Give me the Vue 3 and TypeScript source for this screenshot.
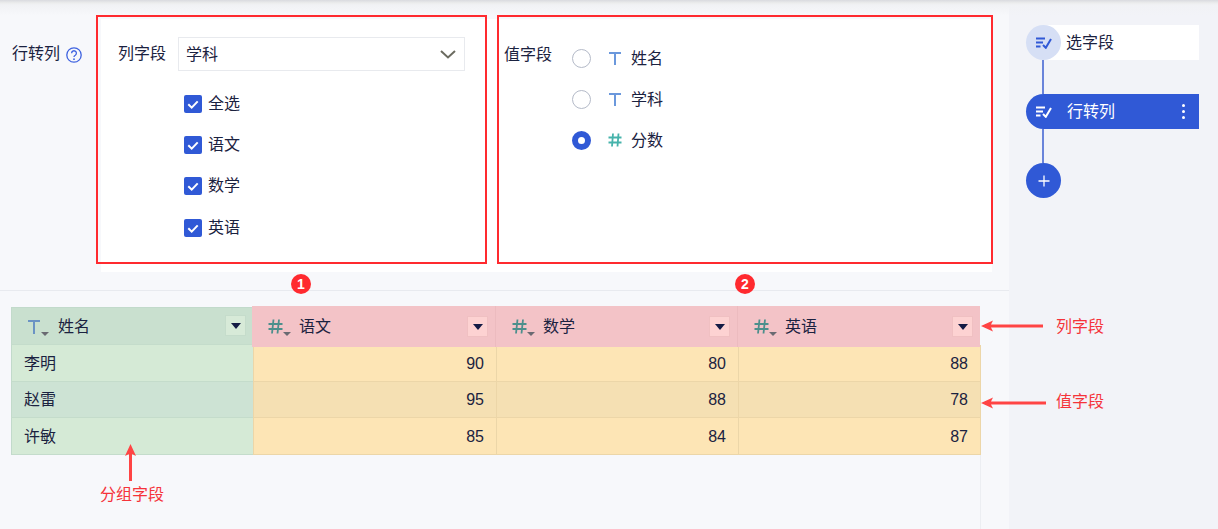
<script setup lang="ts">
const checks: string[] = ['全选', '语文', '数学', '英语']
const values: { type: 'text' | 'num'; label: string; on: boolean }[] = [
  { type: 'text', label: '姓名', on: false },
  { type: 'text', label: '学科', on: false },
  { type: 'num', label: '分数', on: true },
]
const subjects: string[] = ['语文', '数学', '英语']
const rows: { name: string; scores: number[] }[] = [
  { name: '李明', scores: [90, 80, 88] },
  { name: '赵雷', scores: [95, 88, 78] },
  { name: '许敏', scores: [85, 84, 87] },
]
</script>

<template>
  <div class="page">
    <div class="top-fade"></div>

    <main class="main">
      <section class="config">
        <div class="config-label">
          <span>行转列</span>
          <svg class="help" viewBox="0 0 16 16" width="16" height="16">
            <circle cx="8" cy="8" r="7.200" fill="none" stroke="#3f63e0" stroke-width="1.300" />
            <path d="M5.600 6.200a2.400 2.400 0 1 1 3.700 2c-.9.500-1.300.9-1.300 1.900" fill="none" stroke="#3f63e0" stroke-width="1.300" />
            <circle cx="8" cy="12.200" r=".9" fill="#3f63e0" />
          </svg>
        </div>

        <div class="panel">
          <div class="panel-col">
            <div class="select-row">
              <span class="field-name">列字段</span>
              <div class="select">
                <span class="select-value">学科</span>
                <svg viewBox="0 0 16 9" width="16" height="9">
                  <path d="M1 1l7 6.500L15 1" fill="none" stroke="#6b6b60" stroke-width="2" />
                </svg>
              </div>
            </div>
            <ul class="check-list">
              <li v-for="c in checks" :key="c" class="check-item">
                <span class="checkbox">
                  <svg viewBox="0 0 18 18" width="18" height="18">
                    <path d="M4.300 9.300l3.400 3.300 6-6.200" fill="none" stroke="#fff" stroke-width="2" />
                  </svg>
                </span>
                <span>{{ c }}</span>
              </li>
            </ul>
          </div>

          <div class="panel-val">
            <span class="val-name">值字段</span>
            <ul class="radio-list">
              <li v-for="v in values" :key="v.label" class="radio-item">
                <span class="radio" :class="{ on: v.on }"></span>
                <svg v-if="v.type === 'text'" class="type-ic" viewBox="0 0 14 14" width="14" height="14">
                  <path d="M1 2h12M7 2v12" fill="none" stroke="#6b98dc" stroke-width="2" />
                </svg>
                <svg v-else class="type-ic" viewBox="0 0 14 14" width="14" height="14">
                  <path d="M5 .5L4 13.500M10.500 .5l-1 13M.5 4.500h13M.5 9.500h13" fill="none" stroke="#46b3ab" stroke-width="1.800" />
                </svg>
                <span>{{ v.label }}</span>
              </li>
            </ul>
          </div>
        </div>
      </section>

      <section class="data">
        <div class="table">
          <div class="head">
            <div class="hcell green-head">
              <span class="type-wrap">
                <svg viewBox="0 0 14 15" width="14" height="15">
                  <path d="M1 2h12M7 2v13" fill="none" stroke="#6b93c4" stroke-width="2" />
                </svg>
                <i class="mini-caret"></i>
              </span>
              <span>姓名</span>
              <span class="drop green-drop"><i></i></span>
            </div>
            <div class="pink-group">
              <div v-for="s in subjects" :key="s" class="hcell pink">
                <span class="type-wrap num">
                  <svg viewBox="0 0 15 15" width="15" height="15">
                    <path d="M5.500 .5L4 14.500M11 .5L9.500 14.500M.5 5h14M.5 10h14" fill="none" stroke="#4c8f8c" stroke-width="1.800" />
                  </svg>
                  <i class="mini-caret"></i>
                </span>
                <span>{{ s }}</span>
                <span class="drop pink-drop"><i></i></span>
              </div>
            </div>
          </div>
          <div v-for="r in rows" :key="r.name" class="row">
            <div class="cell name">{{ r.name }}</div>
            <div v-for="(n, i) in r.scores" :key="i" class="cell score">{{ n }}</div>
          </div>
        </div>
        <div class="tail"></div>
      </section>
    </main>

    <aside class="flow">
      <div class="node first">
        <span class="disc">
          <svg viewBox="0 0 16 12" width="16" height="12">
            <path d="M0 1.500h9M0 5.500h7M0 9.500h4.500M7 8l2.800 2.800L15 2" fill="none" stroke="#3059d6" stroke-width="2" />
          </svg>
        </span>
        <span>选字段</span>
      </div>
      <div class="link"></div>
      <div class="node active">
        <span class="disc">
          <svg viewBox="0 0 16 12" width="16" height="12">
            <path d="M0 1.500h9M0 5.500h7M0 9.500h4.500M7 8l2.800 2.800L15 2" fill="none" stroke="#fff" stroke-width="2" />
          </svg>
        </span>
        <span>行转列</span>
        <span class="kebab"><i></i><i></i><i></i></span>
      </div>
      <div class="link"></div>
      <div class="add">
        <svg viewBox="0 0 12 12" width="12" height="12">
          <path d="M6 .5v11M.5 6h11" fill="none" stroke="#fff" stroke-width="1.300" />
        </svg>
      </div>
    </aside>

    <!-- annotations drawn over the screenshot -->
    <div class="red-box box-a"></div>
    <div class="red-box box-b"></div>
    <span class="badge badge-a">1</span>
    <span class="badge badge-b">2</span>

    <svg class="arrows" viewBox="0 0 1218 529" width="1218" height="529">
      <g fill="#ff4444" stroke="none">
        <path d="M981 326l12-5.500 -2 4h52v3h-52l2 4z" />
        <path d="M981 403l12-5.500 -2 4h55v3h-55l2 4z" />
        <path d="M130.500 444l-5.500 12 4-2v27h3v-27l4 2z" />
      </g>
    </svg>
    <span class="note note-col">列字段</span>
    <span class="note note-val">值字段</span>
    <span class="note note-group">分组字段</span>
  </div>
</template>

<style>
html,
body {
  margin: 0;
  padding: 0;
}
</style>

<style scoped>
.page {
  position: relative;
  display: flex;
  width: 1218px;
  height: 529px;
  overflow: hidden;
  background: #f7f8fb;
  color: #1b2240;
  font-family: "Liberation Sans", "Noto Sans CJK SC", sans-serif;
  font-size: 16px;
  line-height: 22px;
}
ul {
  list-style: none;
  margin: 0;
  padding: 0;
}
i {
  display: block;
}
.top-fade {
  position: absolute;
  left: 0;
  top: 0;
  z-index: 1;
  width: 100%;
  height: 16px;
  background: linear-gradient(#d9dadf 0, #eceded 3px, #f1f2f5 5px, rgba(244, 245, 248, 0) 16px);
  pointer-events: none;
}

/* main column */
.main {
  display: flex;
  flex-direction: column;
  width: 1009px;
  flex: none;
}
.config {
  display: flex;
  box-sizing: border-box;
  height: 291px;
  border-bottom: 1px solid #e8eaef;
}
.config-label {
  display: flex;
  align-items: center;
  flex: none;
  gap: 6px;
  box-sizing: border-box;
  width: 101px;
  height: 22px;
  margin-top: 43px;
  padding-left: 12px;
}
.help {
  margin-top: 1px;
}
.panel {
  display: flex;
  width: 891px;
  height: 253px;
  margin-top: 19px;
  background: #fff;
}
.panel-col {
  box-sizing: border-box;
  width: 396px;
  padding: 18px 0 0 17px;
}
.select-row {
  display: flex;
  align-items: center;
  gap: 12px;
}
.field-name {
  width: 48px;
  flex: none;
}
.select {
  display: flex;
  align-items: center;
  justify-content: space-between;
  box-sizing: border-box;
  width: 287px;
  height: 34px;
  padding: 0 8px 0 7px;
  border: 1px solid #e8eaee;
}
.select-value {
  padding-top: 1px;
}
.check-list {
  margin: 12px 0 0 66px;
}
.check-item {
  display: flex;
  align-items: center;
  gap: 6px;
  height: 41.300px;
}
.checkbox {
  display: block;
  width: 18px;
  height: 18px;
  border-radius: 2px;
  background: #3059d6;
}
.checkbox svg {
  display: block;
}
.panel-val {
  display: flex;
  box-sizing: border-box;
  padding: 25px 0 0 7px;
}
.val-name {
  width: 68px;
  flex: none;
}
.radio-list {
  margin-top: -6px;
}
.radio-item {
  display: flex;
  align-items: center;
  height: 41.300px;
}
.radio {
  box-sizing: border-box;
  width: 19px;
  height: 19px;
  margin-top: -1px;
  margin-right: 17px;
  border: 1px solid #b4bac8;
  border-radius: 50%;
  background: #fff;
}
.radio.on {
  border: 6px solid #3059d6;
}
.type-ic {
  margin-top: -2px;
  margin-right: 9px;
}

/* table */
.data {
  display: flex;
  flex: 1;
  flex-direction: column;
  padding: 16px 0 0 11px;
}
.table {
  width: 970px;
}
.head {
  display: flex;
  height: 38px;
}
.hcell {
  position: relative;
  display: flex;
  align-items: center;
  box-sizing: border-box;
}
.green-head {
  width: 242px;
  flex: none;
  padding-top: 1px;
  border-top: 1px solid #c2dacb;
  border-left: 1px solid #c2dacb;
  border-bottom: 1px solid #c4dccb;
  background: #c9e0cf;
}
.pink-group {
  position: relative;
  z-index: 1;
  display: grid;
  grid-template-columns: 244px 242px 242px;
  width: 728px;
  height: 41px;
  margin: -1px 0 0 -1px;
  background: #f3c3c7;
}
.pink {
  border-right: 1px solid #ecbbbf;
}
.pink:last-child {
  border-right: 0;
}
.type-wrap {
  position: relative;
  display: block;
  width: 14px;
  height: 15px;
  margin: -1px 17px 0 15px;
}
.pink .type-wrap {
  width: 15px;
  margin-left: 16px;
  margin-right: 16px;
}
.type-wrap svg {
  display: block;
}
.mini-caret {
  position: absolute;
  right: -8px;
  bottom: -2px;
  width: 0;
  height: 0;
  border-top: 4px solid #6a6a72;
  border-left: 4px solid transparent;
  border-right: 4px solid transparent;
}
.drop {
  position: absolute;
  top: 50%;
  right: 7px;
  display: flex;
  align-items: center;
  justify-content: center;
  box-sizing: border-box;
  width: 21px;
  height: 21px;
  margin-top: -11px;
}
.green-drop {
  background: #d7ead8;
  border: 1px solid #c5dccb;
}
.pink-drop {
  background: #fdd2d2;
  border: 1px solid #f0c0c2;
}
.drop i {
  width: 0;
  height: 0;
  margin-top: 1px;
  border-top: 6px solid #141b45;
  border-left: 5px solid transparent;
  border-right: 5px solid transparent;
}
.row {
  display: grid;
  grid-template-columns: 242px 243px 242px 243px;
  height: 36px;
}
.row:nth-child(2),
.row:nth-child(4) {
  height: 37px;
}
.cell {
  display: flex;
  align-items: center;
  box-sizing: border-box;
  border-bottom: 1px solid #ecd6a8;
  padding-top: 1px;
}
.name {
  padding-left: 12px;
  border-left: 1px solid #c2dacb;
  border-bottom-color: #c4dccb;
  background: #d5ead6;
}
.score {
  justify-content: flex-end;
  padding-right: 12px;
  border-left: 1px solid #ecd6a8;
  background: #fde5b5;
}
.score:last-child {
  border-right: 1px solid #ecd6a8;
}
.row:nth-child(3) .name {
  background: #cde3d4;
}
.row:nth-child(3) .score {
  background: #f5e0b3;
}
.tail {
  flex: 1;
  box-sizing: border-box;
  width: 970px;
  border-right: 1px solid #eceef2;
}

/* step list */
.flow {
  display: flex;
  flex-direction: column;
  flex: 1;
  padding: 25px 19px 0 17px;
  background: #f2f3f8;
}
.node {
  display: flex;
  align-items: center;
  height: 35px;
  flex: none;
}
.first {
  background: linear-gradient(90deg, transparent 17px, #fff 17px);
}
.disc {
  display: flex;
  align-items: center;
  justify-content: center;
  flex: none;
  width: 35px;
  height: 35px;
  border-radius: 50%;
}
.first .disc {
  margin-right: 5px;
  background: #d6dff5;
}
.active {
  position: relative;
  border-radius: 17.500px 0 0 17.500px;
  background: #3059d6;
  color: #fff;
}
.active .disc {
  margin-right: 6px;
}
.kebab {
  position: absolute;
  right: 14px;
  top: 10px;
  display: flex;
  flex-direction: column;
  gap: 3px;
}
.kebab i {
  width: 3px;
  height: 3px;
  border-radius: 50%;
  background: #fff;
}
.link {
  width: 2px;
  height: 34px;
  margin-left: 16px;
  background: #6a84da;
  flex: none;
}
.add {
  display: flex;
  align-items: center;
  justify-content: center;
  width: 35px;
  height: 35px;
  border-radius: 50%;
  background: #3059d6;
}

/* annotations */
.red-box {
  position: absolute;
  top: 15px;
  z-index: 2;
  box-sizing: border-box;
  height: 249px;
  border: 2px solid #ff2a2f;
}
.box-a {
  left: 96px;
  width: 391px;
}
.box-b {
  left: 497px;
  width: 496px;
}
.badge {
  position: absolute;
  top: 274px;
  z-index: 2;
  width: 20px;
  height: 20px;
  border-radius: 50%;
  background: #ff2a2f;
  color: #fff;
  font-size: 14px;
  font-weight: 700;
  line-height: 20px;
  text-align: center;
}
.badge-a {
  left: 291px;
}
.badge-b {
  left: 735px;
}
.arrows {
  position: absolute;
  left: 0;
  top: 0;
  z-index: 2;
  pointer-events: none;
}
.note {
  position: absolute;
  z-index: 2;
  color: #f5333a;
}
.note-col {
  left: 1056px;
  top: 316px;
}
.note-val {
  left: 1056px;
  top: 391px;
}
.note-group {
  left: 100px;
  top: 484px;
}
</style>
